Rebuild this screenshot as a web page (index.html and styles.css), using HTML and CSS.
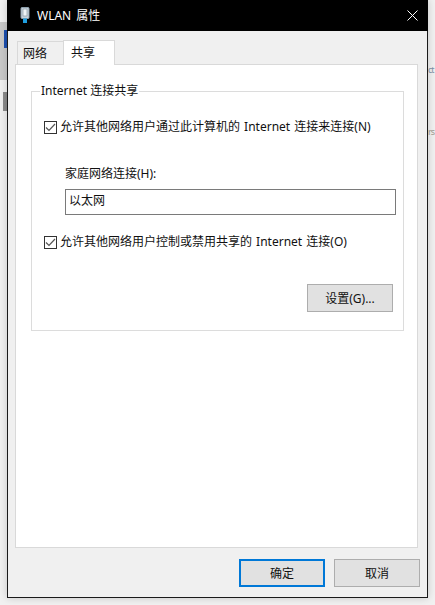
FILE: index.html
```html
<!DOCTYPE html>
<html lang="zh-CN">
<head>
<meta charset="utf-8">
<title>WLAN 属性</title>
<link rel="stylesheet" href="styles.css">
</head>
<body>
<div class="desk" aria-hidden="true">
  <div class="desk-band"></div>
  <div class="desk-blue"></div>
  <div class="desk-grey"></div>
  <div class="desk-text desk-ct">ct</div>
  <div class="desk-text desk-rs">rs</div>
</div>
<div class="dialog">
  <header class="titlebar">
    <svg class="app-icon" width="10" height="16" viewBox="0 0 10 16">
      <rect x="1" y="0.5" width="8" height="11" rx="1" fill="#c9d3dc" stroke="#8ea0ae"/>
      <rect x="3" y="2" width="4" height="7" fill="#eef3f6" stroke="#7f8f9c" stroke-width="0.6"/>
      <rect x="3" y="11.5" width="4" height="4.5" fill="#1f9fe0"/>
    </svg>
    <span class="title">WLAN 属性</span>
    <svg class="close" width="11" height="11" viewBox="0 0 11 11">
      <path d="M0.5 0.5L10.5 10.5M10.5 0.5L0.5 10.5" stroke="#fff" stroke-width="1" fill="none"/>
    </svg>
  </header>
  <main class="content">
    <div class="tabs">
      <div class="tab">网络</div>
      <div class="tab tab-active">共享</div>
    </div>
    <section class="panel">
      <fieldset class="group">
        <legend class="legend">Internet 连接共享</legend>
        <label class="check check-first"><span class="box"><svg width="11" height="11" viewBox="0 0 11 11"><path d="M1 5.5L4 8.5L10 2" stroke="#555" stroke-width="1.2" fill="none"/></svg></span>允许其他网络用户通过此计算机的 Internet 连接来连接(N)</label>
        <div class="field-label">家庭网络连接(H):</div>
        <div class="field">以太网</div>
        <label class="check check-second"><span class="box"><svg width="11" height="11" viewBox="0 0 11 11"><path d="M1 5.5L4 8.5L10 2" stroke="#555" stroke-width="1.2" fill="none"/></svg></span>允许其他网络用户控制或禁用共享的 Internet 连接(O)</label>
        <div class="settings-row"><button class="btn">设置(G)...</button></div>
      </fieldset>
    </section>
    <footer class="footer">
      <button class="btn btn-default">确定</button>
      <button class="btn">取消</button>
    </footer>
  </main>
</div>
</body>
</html>
```

FILE: styles.css
```css
* { box-sizing: border-box; }
html, body { margin: 0; height: 605px; overflow: hidden; }
body {
  position: relative;
  padding-left: 7px;
  background: #f1f1f1;
  font-family: "Noto Sans", "Noto Sans CJK SC", sans-serif;
  font-size: 12px;
  color: #111;
}
.desk { position: absolute; inset: 0; }
.desk-band { position: absolute; left: 0; top: 22px; width: 7px; height: 58px; background: #c9c9c9; }
.desk-blue { position: absolute; left: 4px; top: 30px; width: 3px; height: 18px; background: #1c4fb0; }
.desk-grey { position: absolute; left: 3px; top: 92px; width: 4px; height: 19px; background: #8c8c8c; }
.desk-text { position: absolute; left: 428px; font-size: 9px; letter-spacing: -1px; color: #7f93a8; }
.desk-ct { top: 63px; }
.desk-rs { top: 125px; color: #a09a90; }
.dialog {
  position: relative;
  width: 421px;
  height: 598px;
  display: flex;
  flex-direction: column;
  background: #f0f0f0;
  border: 1px solid #1a1a1a;
  border-top: 0;
  box-shadow: 0 0 8px rgba(0, 0, 0, 0.18);
}
.titlebar {
  flex: none;
  height: 31px;
  margin: 0 -1px;
  padding: 0 10px 0 13px;
  display: flex;
  align-items: center;
  background: #000;
  color: #fff;
}
.app-icon { flex: none; margin-top: -1px; }
.title { margin-left: 7px; line-height: 1; word-spacing: 2px; }
.close { margin-left: auto; }
.content { flex: 1; display: flex; flex-direction: column; padding: 9px 9px 0 7px; }
.tabs { display: flex; padding-left: 2px; align-items: flex-end; height: 25px; position: relative; z-index: 1; margin-bottom: -1px; }
.tab {
  width: 47px;
  height: 23px;
  margin-bottom: 1px;
  padding: 2px 0 0 5px;
  border: 1px solid #d9d9d9;
  border-bottom: 0;
  background: #f0f0f0;
  line-height: 20px;
}
.tab-active {
  width: 52px;
  height: 25px;
  margin-bottom: 0;
  margin-left: -1px;
  padding: 2px 0 0 7px;
  background: #fff;
}
.panel {
  flex: none;
  height: 484px;
  padding: 18px 13px 0 15px;
  background: #fff;
  border: 1px solid #d9d9d9;
}
.group {
  margin: 0;
  height: 248px;
  padding: 0 7px 0 12px;
  border: 1px solid #dcdcdc;
  min-width: 0;
}
.legend { margin-left: -4px; padding: 0 1px; line-height: 16px; }
.check { display: flex; align-items: center; height: 18px; line-height: 18px; white-space: nowrap; word-spacing: 1px; }
.check-first { margin-top: 19px; }
.check-second { margin-top: 18px; }
.box {
  flex: none;
  width: 13px;
  height: 13px;
  margin-right: 3px;
  border: 1px solid #333;
  background: #fff;
  display: flex;
  align-items: center;
  justify-content: center;
}
.field-label { margin: 29px 0 0 21px; line-height: 18px; }
.field {
  margin: 6px 0 0 21px;
  height: 26px;
  padding-left: 3px;
  border: 1px solid #7a7a7a;
  line-height: 22px;
}
.settings-row { display: flex; justify-content: flex-end; margin-top: 33px; padding-right: 3px; }
.btn {
  width: 86px;
  height: 28px;
  padding: 0;
  font: inherit;
  color: #111;
  background: #e1e1e1;
  border: 1px solid #adadad;
}
.btn-default { border: 2px solid #0078d7; }
.footer { display: flex; justify-content: flex-end; gap: 9px; margin-top: 11px; margin-right: -2px; }
```
